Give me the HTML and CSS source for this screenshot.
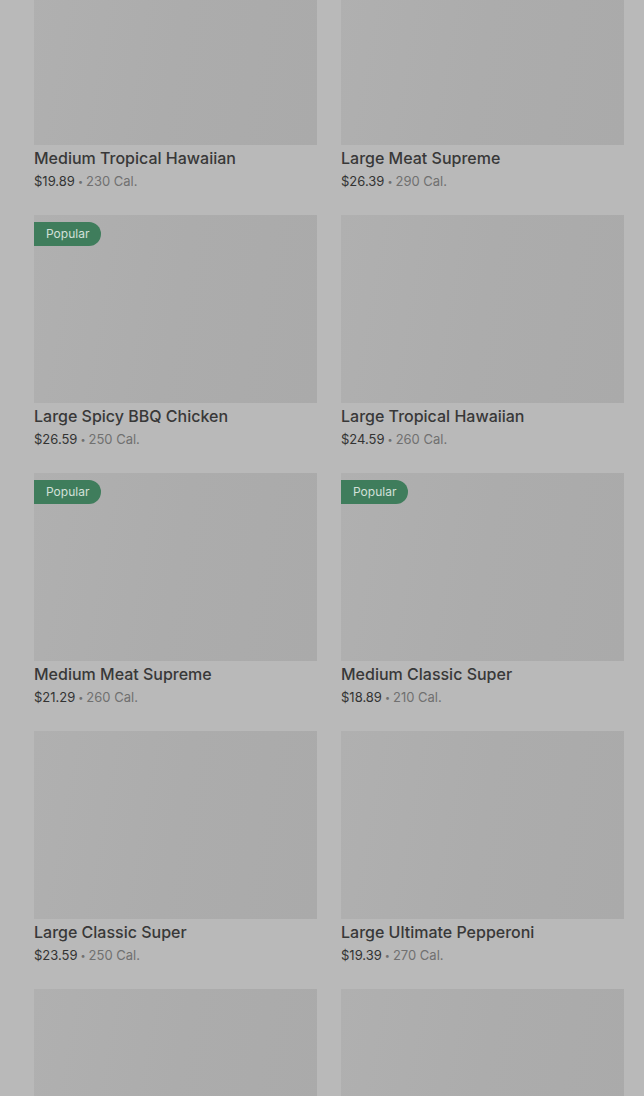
FILE: index.html
```html
<!DOCTYPE html>
<html lang="en">
<head>
  <meta charset="UTF-8">
  <meta name="viewport" content="width=device-width, initial-scale=1.0">
  <title>Menu</title>
  <link rel="stylesheet" href="styles.css">
</head>
<body>
  <div class="menu-grid">
    <div class="item">
      <div class="thumb"></div>
      <div class="name">Medium Tropical Hawaiian</div>
      <div class="meta"><span class="price">$19.89</span><span class="dot">•</span><span>230 Cal.</span></div>
    </div>
    <div class="item">
      <div class="thumb"></div>
      <div class="name">Large Meat Supreme</div>
      <div class="meta"><span class="price">$26.39</span><span class="dot">•</span><span>290 Cal.</span></div>
    </div>

    <div class="item">
      <div class="thumb"><span class="badge">Popular</span></div>
      <div class="name">Large Spicy BBQ Chicken</div>
      <div class="meta"><span class="price">$26.59</span><span class="dot">•</span><span>250 Cal.</span></div>
    </div>
    <div class="item">
      <div class="thumb"></div>
      <div class="name">Large Tropical Hawaiian</div>
      <div class="meta"><span class="price">$24.59</span><span class="dot">•</span><span>260 Cal.</span></div>
    </div>

    <div class="item">
      <div class="thumb"><span class="badge">Popular</span></div>
      <div class="name">Medium Meat Supreme</div>
      <div class="meta"><span class="price">$21.29</span><span class="dot">•</span><span>260 Cal.</span></div>
    </div>
    <div class="item">
      <div class="thumb"><span class="badge">Popular</span></div>
      <div class="name">Medium Classic Super</div>
      <div class="meta"><span class="price">$18.89</span><span class="dot">•</span><span>210 Cal.</span></div>
    </div>

    <div class="item">
      <div class="thumb"></div>
      <div class="name">Large Classic Super</div>
      <div class="meta"><span class="price">$23.59</span><span class="dot">•</span><span>250 Cal.</span></div>
    </div>
    <div class="item">
      <div class="thumb"></div>
      <div class="name">Large Ultimate Pepperoni</div>
      <div class="meta"><span class="price">$19.39</span><span class="dot">•</span><span>270 Cal.</span></div>
    </div>

    <div class="item">
      <div class="thumb"></div>
    </div>
    <div class="item">
      <div class="thumb"></div>
    </div>
  </div>
</body>
</html>
```

FILE: styles.css
```css
html, body {
  margin: 0;
  height: 100%;
  overflow: hidden;
}

body {
  background-color: #b9b9b9;
  font-family: Inter, Roboto, "Liberation Sans", sans-serif;
  color: #333;
}

.menu-grid {
  display: grid;
  grid-template-columns: 283px 283px;
  column-gap: 24px;
  row-gap: 25px;
  padding: 0 20px 0 34px;
  margin-top: -43px;
}

.thumb {
  position: relative;
  height: 188px;
  background: linear-gradient(100deg, #b0b0b0 0%, #acacac 50%, #aaaaaa 100%);
}

.badge {
  position: absolute;
  top: 7px;
  left: 0;
  height: 24px;
  line-height: 24px;
  padding: 0 12px;
  background-color: #3f7d5c;
  color: #d3e0d9;
  font-size: 12px;
  border-radius: 0 12px 12px 0;
}

.name {
  margin-top: 3px;
  font-size: 16px;
  line-height: 20px;
  font-weight: 500;
  color: #383838;
}

.meta {
  margin-top: 4px;
  height: 18px;
  font-size: 13px;
  line-height: 18px;
  color: #707070;
}

.price {
  color: #333;
}

.dot {
  margin: 0 3px;
  font-size: 9px;
  line-height: 0;
  vertical-align: 1px;
}
```
